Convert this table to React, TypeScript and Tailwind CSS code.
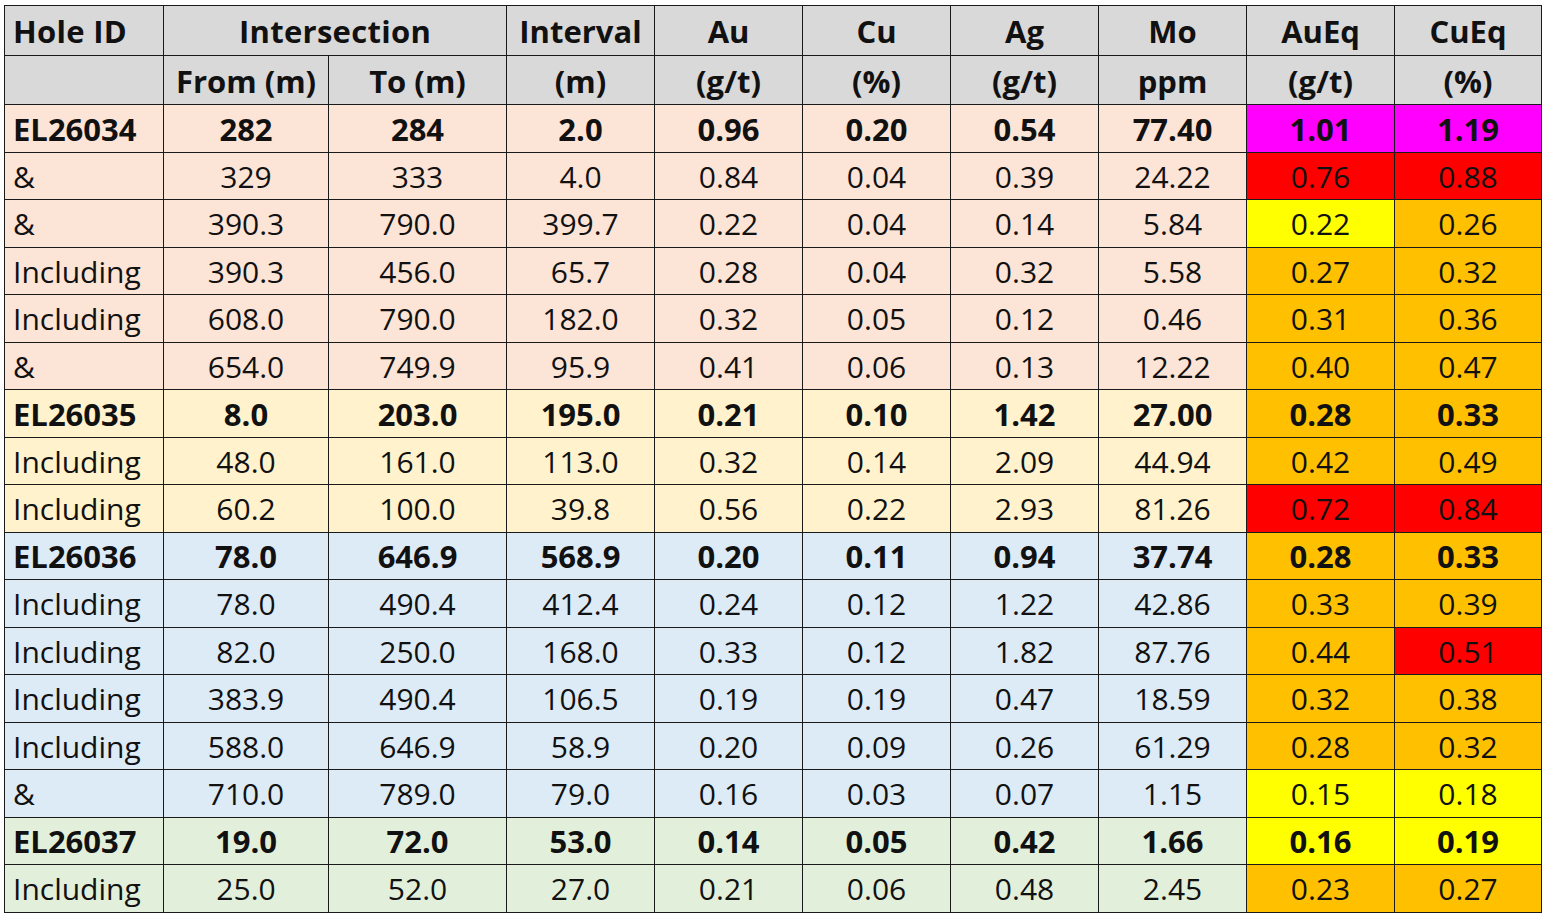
import React from "react";

type Cell = { v: string; bg?: string };
type Row = { id: string; bold: boolean; bg: string; vals: string[]; au: Cell; cu: Cell };

const PINK = "bg-[#fce4d6]";
const CREAM = "bg-[#fff2cc]";
const BLUE = "bg-[#ddebf7]";
const GREEN = "bg-[#e2efda]";
const MAG = "bg-[#ff00ff]";
const RED = "bg-[#ff0000]";
const ORG = "bg-[#ffc000]";
const YEL = "bg-[#ffff00]";

const rows: Row[] = [
  { id: "EL26034", bold: true, bg: PINK, vals: ["282", "284", "2.0", "0.96", "0.20", "0.54", "77.40"], au: { v: "1.01", bg: MAG }, cu: { v: "1.19", bg: MAG } },
  { id: "&", bold: false, bg: PINK, vals: ["329", "333", "4.0", "0.84", "0.04", "0.39", "24.22"], au: { v: "0.76", bg: RED }, cu: { v: "0.88", bg: RED } },
  { id: "&", bold: false, bg: PINK, vals: ["390.3", "790.0", "399.7", "0.22", "0.04", "0.14", "5.84"], au: { v: "0.22", bg: YEL }, cu: { v: "0.26", bg: ORG } },
  { id: "Including", bold: false, bg: PINK, vals: ["390.3", "456.0", "65.7", "0.28", "0.04", "0.32", "5.58"], au: { v: "0.27", bg: ORG }, cu: { v: "0.32", bg: ORG } },
  { id: "Including", bold: false, bg: PINK, vals: ["608.0", "790.0", "182.0", "0.32", "0.05", "0.12", "0.46"], au: { v: "0.31", bg: ORG }, cu: { v: "0.36", bg: ORG } },
  { id: "&", bold: false, bg: PINK, vals: ["654.0", "749.9", "95.9", "0.41", "0.06", "0.13", "12.22"], au: { v: "0.40", bg: ORG }, cu: { v: "0.47", bg: ORG } },
  { id: "EL26035", bold: true, bg: CREAM, vals: ["8.0", "203.0", "195.0", "0.21", "0.10", "1.42", "27.00"], au: { v: "0.28", bg: ORG }, cu: { v: "0.33", bg: ORG } },
  { id: "Including", bold: false, bg: CREAM, vals: ["48.0", "161.0", "113.0", "0.32", "0.14", "2.09", "44.94"], au: { v: "0.42", bg: ORG }, cu: { v: "0.49", bg: ORG } },
  { id: "Including", bold: false, bg: CREAM, vals: ["60.2", "100.0", "39.8", "0.56", "0.22", "2.93", "81.26"], au: { v: "0.72", bg: RED }, cu: { v: "0.84", bg: RED } },
  { id: "EL26036", bold: true, bg: BLUE, vals: ["78.0", "646.9", "568.9", "0.20", "0.11", "0.94", "37.74"], au: { v: "0.28", bg: ORG }, cu: { v: "0.33", bg: ORG } },
  { id: "Including", bold: false, bg: BLUE, vals: ["78.0", "490.4", "412.4", "0.24", "0.12", "1.22", "42.86"], au: { v: "0.33", bg: ORG }, cu: { v: "0.39", bg: ORG } },
  { id: "Including", bold: false, bg: BLUE, vals: ["82.0", "250.0", "168.0", "0.33", "0.12", "1.82", "87.76"], au: { v: "0.44", bg: ORG }, cu: { v: "0.51", bg: RED } },
  { id: "Including", bold: false, bg: BLUE, vals: ["383.9", "490.4", "106.5", "0.19", "0.19", "0.47", "18.59"], au: { v: "0.32", bg: ORG }, cu: { v: "0.38", bg: ORG } },
  { id: "Including", bold: false, bg: BLUE, vals: ["588.0", "646.9", "58.9", "0.20", "0.09", "0.26", "61.29"], au: { v: "0.28", bg: ORG }, cu: { v: "0.32", bg: ORG } },
  { id: "&", bold: false, bg: BLUE, vals: ["710.0", "789.0", "79.0", "0.16", "0.03", "0.07", "1.15"], au: { v: "0.15", bg: YEL }, cu: { v: "0.18", bg: YEL } },
  { id: "EL26037", bold: true, bg: GREEN, vals: ["19.0", "72.0", "53.0", "0.14", "0.05", "0.42", "1.66"], au: { v: "0.16", bg: YEL }, cu: { v: "0.19", bg: YEL } },
  { id: "Including", bold: false, bg: GREEN, vals: ["25.0", "52.0", "27.0", "0.21", "0.06", "0.48", "2.45"], au: { v: "0.23", bg: ORG }, cu: { v: "0.27", bg: ORG } },
];

const cell = "border-[1.5px] border-[#1a1a1a] p-0 pt-[2px]";

export default function App() {
  return (
    <div
      className="w-[1548px] h-[918px] bg-white pt-[5px] pl-[4px]"
      style={{ fontFamily: '"Open Sans", "Liberation Sans", sans-serif' }}
    >
      <table className="table-fixed border-collapse text-[30px] leading-none text-[#111] w-[1537px]">
        <colgroup>
          <col className="w-[159px]" />
          <col className="w-[165px]" />
          <col className="w-[178px]" />
          <col className="w-[148px]" />
          <col className="w-[148px]" />
          <col className="w-[148px]" />
          <col className="w-[148px]" />
          <col className="w-[148px]" />
          <col className="w-[148px]" />
          <col className="w-[147px]" />
        </colgroup>
        <thead className="font-bold bg-[#d9d9d9] text-[31px]">
          <tr className="h-[50px]">
            <th className={`${cell} text-left pl-[8px] font-bold tracking-[0.3px]`}>Hole ID</th>
            <th className={`${cell} text-center font-bold tracking-[0.3px]`} colSpan={2}>Intersection</th>
            <th className={`${cell} text-center font-bold`}>Interval</th>
            <th className={`${cell} text-center font-bold`}>Au</th>
            <th className={`${cell} text-center font-bold`}>Cu</th>
            <th className={`${cell} text-center font-bold`}>Ag</th>
            <th className={`${cell} text-center font-bold`}>Mo</th>
            <th className={`${cell} text-center font-bold`}>AuEq</th>
            <th className={`${cell} text-center font-bold`}>CuEq</th>
          </tr>
          <tr className="h-[49px]">
            <th className={cell}></th>
            <th className={`${cell} text-center font-bold`}>From (m)</th>
            <th className={`${cell} text-center font-bold`}>To (m)</th>
            <th className={`${cell} text-center font-bold`}>(m)</th>
            <th className={`${cell} text-center font-bold`}>(g/t)</th>
            <th className={`${cell} text-center font-bold`}>(%)</th>
            <th className={`${cell} text-center font-bold`}>(g/t)</th>
            <th className={`${cell} text-center font-bold`}>ppm</th>
            <th className={`${cell} text-center font-bold`}>(g/t)</th>
            <th className={`${cell} text-center font-bold`}>(%)</th>
          </tr>
        </thead>
        <tbody>
          {rows.map((r, i) => (
            <tr key={i} className={`h-[47.5px] ${r.bold ? "font-bold text-[31px]" : "font-normal"}`}>
              <td className={`${cell} ${r.bg} text-left pl-[8px]`}>{r.id}</td>
              {r.vals.map((v, j) => (
                <td key={j} className={`${cell} ${r.bg} text-center`}>{v}</td>
              ))}
              <td className={`${cell} ${r.au.bg} text-center`}>{r.au.v}</td>
              <td className={`${cell} ${r.cu.bg} text-center`}>{r.cu.v}</td>
            </tr>
          ))}
        </tbody>
      </table>
    </div>
  );
}
